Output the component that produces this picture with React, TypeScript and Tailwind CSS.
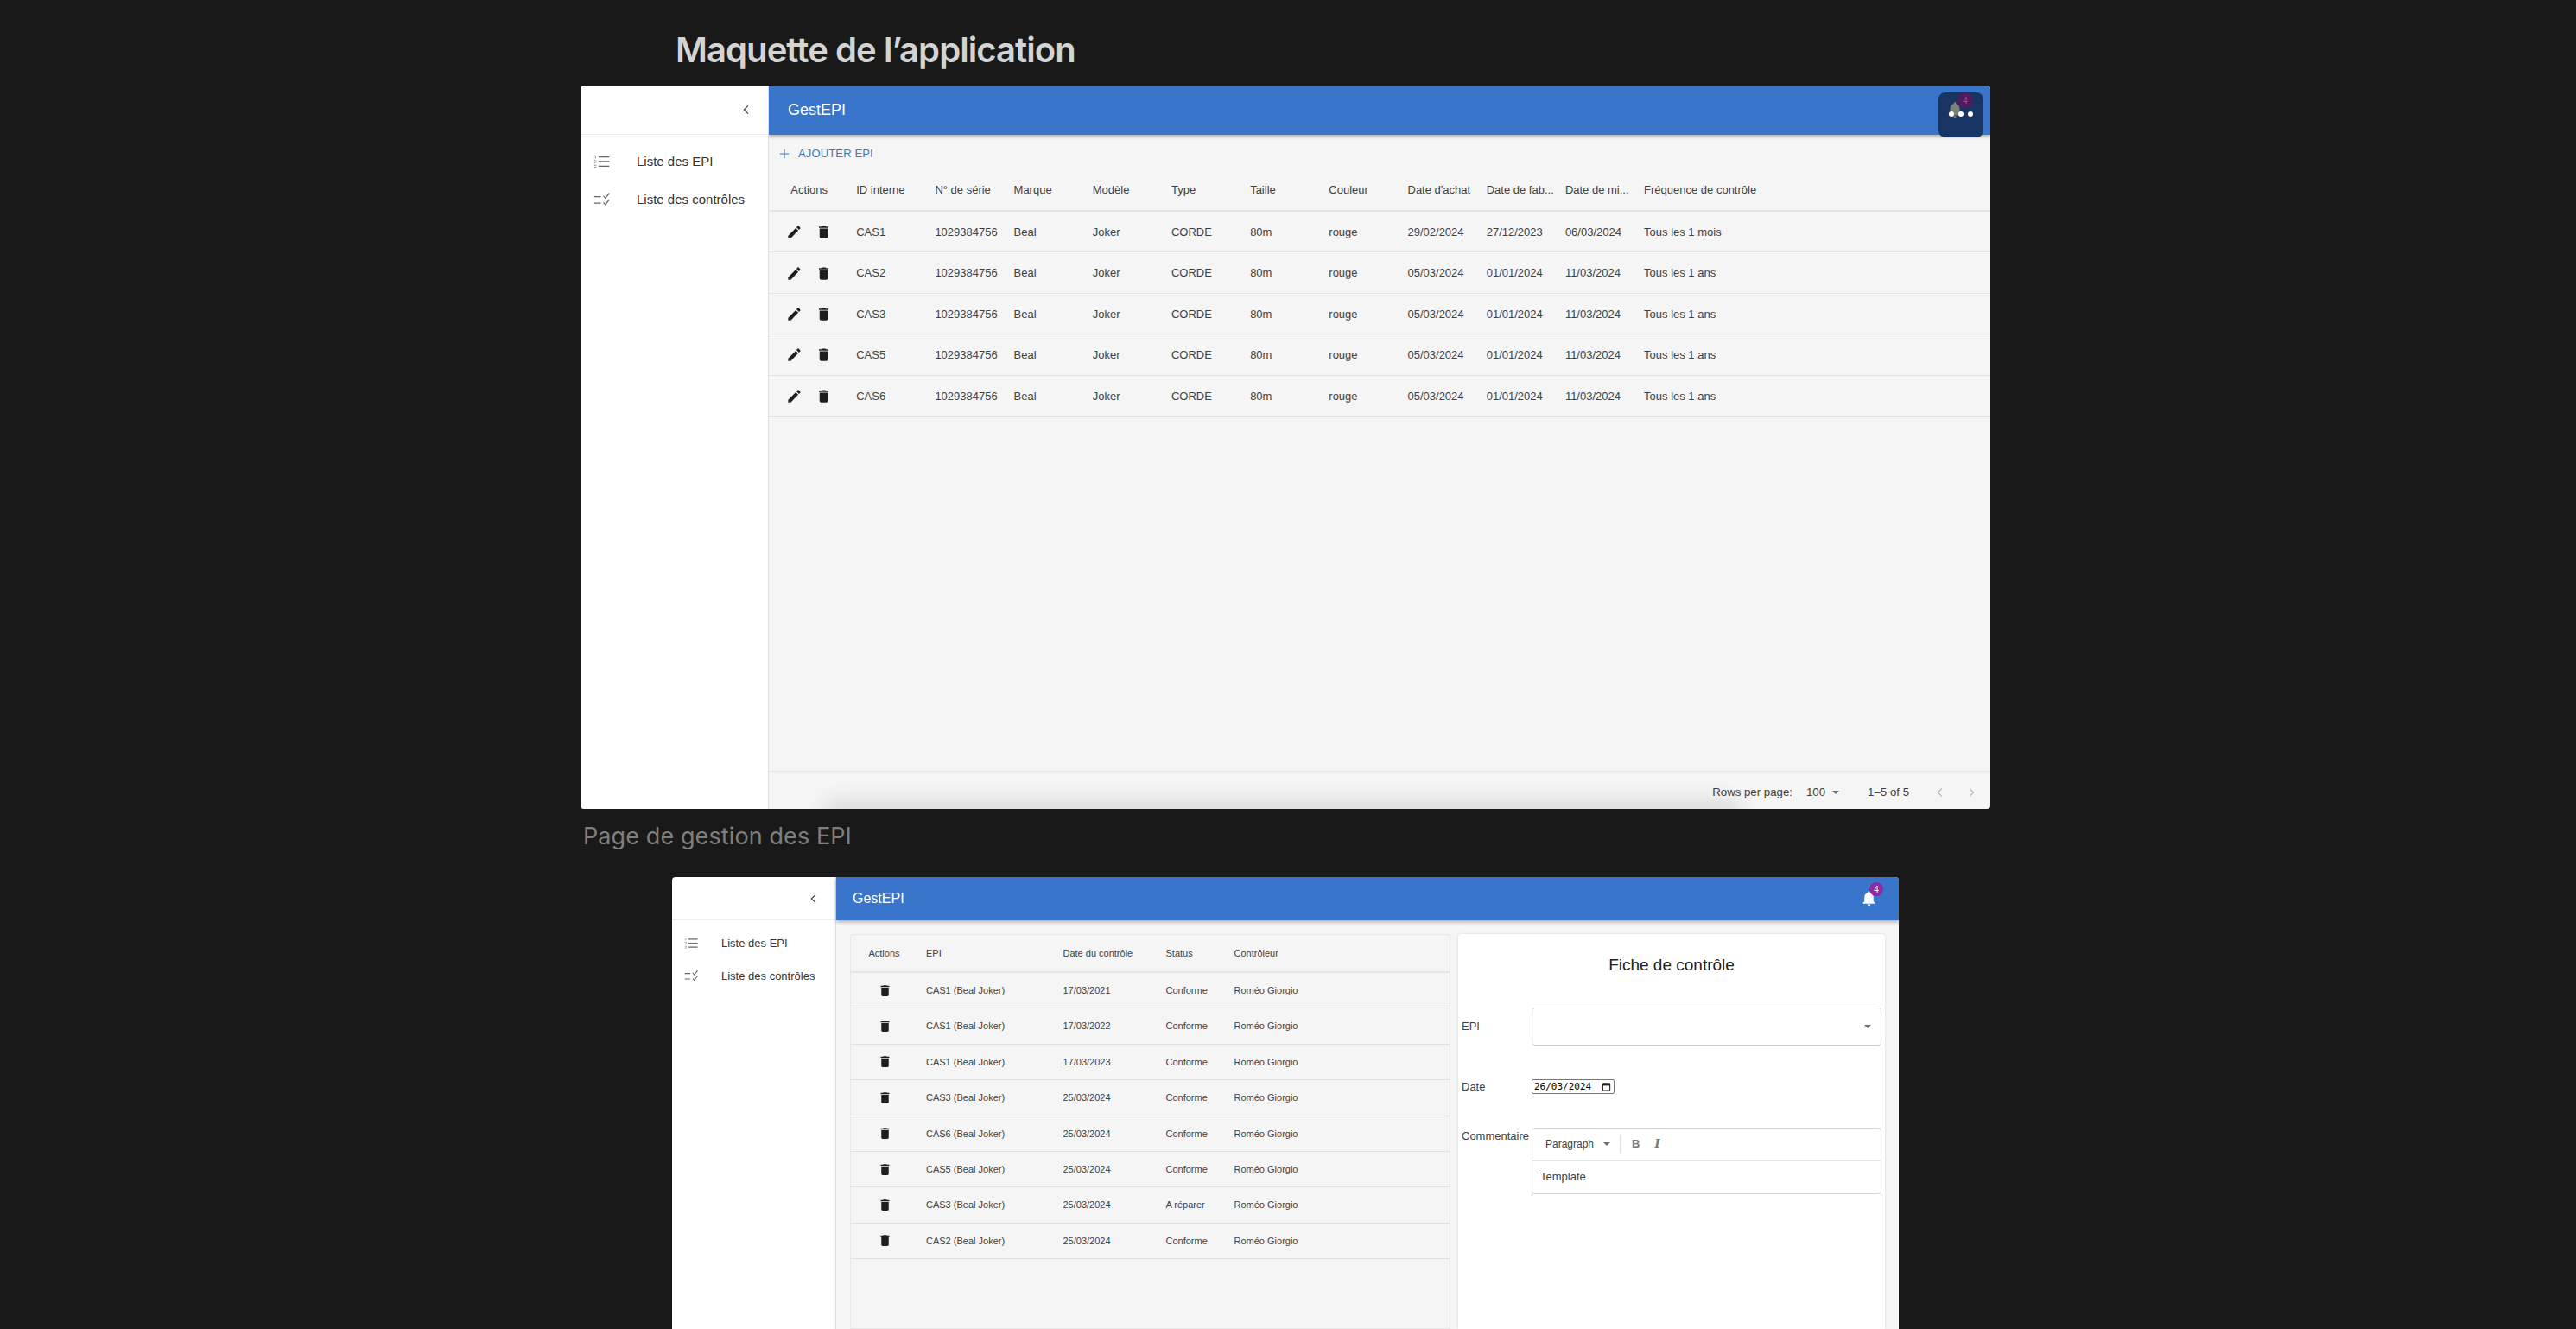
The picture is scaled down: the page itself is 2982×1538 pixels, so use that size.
import React from "react";

const sans = "font-['Liberation_Sans',Arial,sans-serif]";

const EDIT = "M3 17.25V21h3.75L17.81 9.94l-3.75-3.75L3 17.25zM20.71 7.04c.39-.39.39-1.02 0-1.41l-2.34-2.34c-.39-.39-1.02-.39-1.41 0l-1.83 1.83 3.75 3.75 1.83-1.83z";
const TRASH = "M6 19c0 1.1.9 2 2 2h8c1.1 0 2-.9 2-2V7H6v12zM19 4h-3.5l-1-1h-5l-1 1H5v2h14V4z";
const BELL = "M12 22c1.1 0 2-.9 2-2h-4c0 1.1.89 2 2 2zm6-6v-5c0-3.07-1.64-5.64-4.5-6.32V4c0-.83-.67-1.5-1.5-1.5s-1.5.67-1.5 1.5v.68C7.63 5.36 6 7.92 6 11v5l-2 2v1h16v-1l-2-2z";

function Mui({ d, className }: { d: string; className: string }) {
  return (
    <svg viewBox="0 0 24 24" fill="currentColor" className={className}>
      <path d={d} />
    </svg>
  );
}

function Chevron({ left, className }: { left?: boolean; className: string }) {
  return (
    <svg viewBox="0 0 24 24" fill="none" stroke="currentColor" strokeWidth="1.8" className={className}>
      <path d={left ? "M15 5l-7 7 7 7" : "M9 5l7 7-7 7"} />
    </svg>
  );
}

function Caret({ className }: { className: string }) {
  return (
    <svg viewBox="0 0 10 5" fill="currentColor" className={className}>
      <path d="M0 0h10L5 5z" />
    </svg>
  );
}

function NumberedIcon({ className }: { className: string }) {
  return (
    <svg viewBox="0 0 24 24" fill="none" stroke="currentColor" className={className}>
      <path d="M7 5.5h15M7 12h15M7 18.5h15" strokeWidth="1.6" />
      <path d="M1 4h2v3H1M1 10.5h2.5v3H1M1 17h2.5v3H1" strokeWidth="1" strokeDasharray="1.4 0.8" />
    </svg>
  );
}

function CheckIcon({ className }: { className: string }) {
  return (
    <svg viewBox="0 0 24 24" fill="none" stroke="currentColor" className={className}>
      <path d="M1 8h9M1 17h9" strokeWidth="1.6" />
      <path d="M14 7l2.5 3L22 3M14 16l2.5 3L22 12" strokeWidth="1.5" />
    </svg>
  );
}

const epiHead = ["ID interne", "N° de série", "Marque", "Modèle", "Type", "Taille", "Couleur", "Date d'achat", "Date de fab...", "Date de mi...", "Fréquence de contrôle"];
const epiRows = [
  ["CAS1", "29/02/2024", "27/12/2023", "06/03/2024", "Tous les 1 mois"],
  ["CAS2", "05/03/2024", "01/01/2024", "11/03/2024", "Tous les 1 ans"],
  ["CAS3", "05/03/2024", "01/01/2024", "11/03/2024", "Tous les 1 ans"],
  ["CAS5", "05/03/2024", "01/01/2024", "11/03/2024", "Tous les 1 ans"],
  ["CAS6", "05/03/2024", "01/01/2024", "11/03/2024", "Tous les 1 ans"],
];
const ctrlRows = [
  ["CAS1 (Beal Joker)", "17/03/2021", "Conforme"],
  ["CAS1 (Beal Joker)", "17/03/2022", "Conforme"],
  ["CAS1 (Beal Joker)", "17/03/2023", "Conforme"],
  ["CAS3 (Beal Joker)", "25/03/2024", "Conforme"],
  ["CAS6 (Beal Joker)", "25/03/2024", "Conforme"],
  ["CAS5 (Beal Joker)", "25/03/2024", "Conforme"],
  ["CAS3 (Beal Joker)", "25/03/2024", "A réparer"],
  ["CAS2 (Beal Joker)", "25/03/2024", "Conforme"],
];

const epiGrid = "grid grid-cols-[repeat(12,91.2px)_1fr] items-center";
const ctrlGrid = "grid grid-cols-[77px_158.5px_119px_79px_1fr] items-center";

function EpiTable() {
  return (
    <div className="flex-1 min-w-0 flex flex-col bg-[#f5f5f5] text-[13px] text-[#3f3f3f] relative overflow-hidden">
      <div className="h-[57px] shrink-0 flex items-center justify-between bg-[#3975cb] pl-[22px] shadow-[0_2px_4px_rgba(0,0,0,0.3)] rounded-tr-[4px] relative">
        <span className="text-[18px] text-white">GestEPI</span>
      </div>
      <div className="h-[44px] shrink-0 flex items-center pl-[12px] text-[#3975cb]">
        <svg viewBox="0 0 14 14" fill="none" stroke="currentColor" strokeWidth="1.3" className="w-[12px] h-[12px]">
          <path d="M7 1v12M1 7h12" />
        </svg>
        <span className="ml-[10px] tracking-[0.15px]">AJOUTER EPI</span>
      </div>
      <div className={`${epiGrid} h-[45px] shrink-0 border-b-[2px] border-[#e4e4e4] pb-[4px]`}>
        <div className="text-center pl-[2px]">Actions</div>
        {epiHead.map((h) => (
          <div key={h} className="pl-[10px] whitespace-nowrap">{h}</div>
        ))}
      </div>
      {epiRows.map((r) => (
        <div key={r[0]} className={`${epiGrid} h-[47.4px] shrink-0 border-b border-[#e2e2e2] pt-[1px]`}>
          <div className="flex items-center justify-center gap-[15px] pl-[1px]">
            <Mui d={EDIT} className="w-[19px] h-[19px] text-[#1e1e1e]" />
            <Mui d={TRASH} className="w-[19px] h-[19px] text-[#1e1e1e]" />
          </div>
          <div className="pl-[10px]">{r[0]}</div>
          <div className="pl-[10px]">1029384756</div>
          <div className="pl-[10px]">Beal</div>
          <div className="pl-[10px]">Joker</div>
          <div className="pl-[10px]">CORDE</div>
          <div className="pl-[10px]">80m</div>
          <div className="pl-[10px]">rouge</div>
          <div className="pl-[10px]">{r[1]}</div>
          <div className="pl-[10px]">{r[2]}</div>
          <div className="pl-[10px]">{r[3]}</div>
          <div className="pl-[10px] whitespace-nowrap">{r[4]}</div>
          <div />
        </div>
      ))}
      <div className="flex-1" />
      <div className="h-[44px] shrink-0 border-t border-[#e4e4e4] flex items-center justify-end pr-[14px] pt-[4px] text-[13.25px] relative">
        <span className="absolute left-[75px] right-[300px] -bottom-[4px] h-[4px] shadow-[0_0_22px_10px_rgba(0,0,0,0.11)]" />
        <span className="relative">Rows per page:</span>
        <span className="ml-[16px]">100</span>
        <Caret className="w-[8px] h-[4px] ml-[8px] text-[#6f6f6f]" />
        <span className="ml-[33px]">1–5 of 5</span>
        <Chevron left className="w-[16px] h-[16px] ml-[28px] text-[#b5b5b5]" />
        <Chevron className="w-[16px] h-[16px] ml-[20px] text-[#b5b5b5]" />
      </div>
    </div>
  );
}

function ControlPanel() {
  return (
    <div className="flex-1 min-w-0 flex flex-col bg-[#f5f5f5] text-[#3f3f3f]">
      <div className="h-[50px] shrink-0 flex items-center justify-between bg-[#3975cb] pl-[19px] pr-[24px] shadow-[0_2px_4px_rgba(0,0,0,0.3)] rounded-tr-[4px] relative">
        <span className="text-[16px] text-white">GestEPI</span>
        <div className="relative mb-[1px]">
          <Mui d={BELL} className="w-[21px] h-[21px] text-white" />
          <span className="absolute -top-[8px] -right-[6px] w-[16px] h-[16px] rounded-full bg-[#8a2ba3] text-white text-[10px] flex items-center justify-center">4</span>
        </div>
      </div>
      <div className="flex-1 min-h-0 flex gap-[9px] pl-[16px] pr-[16px] pt-[16px]">
        <div className="w-[695px] shrink-0 border border-[#e8e8e8] rounded-t-[4px] text-[11px]">
          <div className={`${ctrlGrid} h-[44px] border-b-[2px] border-[#e4e4e4]`}>
            <div className="text-center">Actions</div>
            <div className="pl-[10px]">EPI</div>
            <div className="pl-[10px]">Date du contrôle</div>
            <div className="pl-[10px]">Status</div>
            <div className="pl-[10px]">Contrôleur</div>
          </div>
          {ctrlRows.map((r, i) => (
            <div key={i} className={`${ctrlGrid} h-[41.4px] border-b border-[#e0e0e0]`}>
              <div className="flex justify-center pl-[1px]">
                <Mui d={TRASH} className="w-[17px] h-[17px] text-[#1e1e1e]" />
              </div>
              <div className="pl-[10px]">{r[0]}</div>
              <div className="pl-[10px]">{r[1]}</div>
              <div className="pl-[10px]">{r[2]}</div>
              <div className="pl-[10px]">Roméo Giorgio</div>
            </div>
          ))}
        </div>
        <div className="flex-1 min-w-0 bg-white rounded-t-[4px] shadow-[0_0_3px_rgba(0,0,0,0.12)] pl-[4px] pr-[4px]">
          <h2 className="text-center text-[19px] text-[#222] mt-[24px] leading-[24px]">Fiche de contrôle</h2>
          <div className="mt-[37px] flex items-center text-[13px]">
            <span className="w-[81px] shrink-0">EPI</span>
            <div className="flex-1 h-[44px] border border-[#cfcfcf] rounded-[4px] flex items-center justify-end pr-[11px]">
              <Caret className="w-[8px] h-[4px] text-[#6f6f6f]" />
            </div>
          </div>
          <div className="mt-[38px] flex items-center text-[13px]">
            <span className="w-[81px] shrink-0">Date</span>
            <div className="w-[96px] h-[17px] border border-[#767676] rounded-[2px] flex items-center justify-between pl-[2px] pr-[3px] text-[11px] text-black font-['DejaVu_Sans_Mono',monospace]">
              <span>26/03/2024</span>
              <svg viewBox="0 0 12 12" className="w-[11px] h-[11px]" fill="none" stroke="#222" strokeWidth="1.2">
                <rect x="1.5" y="2" width="9" height="9" rx="1" />
                <path d="M1.5 3.8h9" strokeWidth="2" />
              </svg>
            </div>
          </div>
          <div className="mt-[37px] flex items-start text-[13px]">
            <span className="w-[81px] shrink-0">Commentaire</span>
            <div className="flex-1 h-[77px] border border-[#d6d6d6] rounded-[4px] flex flex-col">
              <div className="h-[38px] shrink-0 border-b border-[#e2e2e2] flex items-center pl-[15px] text-[12px]">
                <span>Paragraph</span>
                <Caret className="w-[8px] h-[4px] ml-[11px] text-[#6f6f6f]" />
                <span className="w-px h-[22px] bg-[#e2e2e2] ml-[11px]" />
                <span className="ml-[13px] font-bold text-[#777] text-[13px]">B</span>
                <span className="ml-[17px] font-bold italic text-[#777] text-[13px] font-['DejaVu_Serif',serif]">I</span>
              </div>
              <div className="flex-1 flex items-center pl-[9px]">Template</div>
            </div>
          </div>
        </div>
      </div>
    </div>
  );
}

function Sidebar({ w, h, text, itemGap, icon, pad, top }: { w: string; h: string; text: string; itemGap: string; icon: string; pad: string; top: string }) {
  return (
    <aside className={`${w} shrink-0 bg-white border-r border-[#dedede] flex flex-col text-[#333] ${text}`}>
      <div className={`${h} shrink-0 flex items-center justify-end pr-[17px] border-b border-[#ececec] text-[#444]`}>
        <Chevron left className="w-[16px] h-[16px]" />
      </div>
      <div className={`flex flex-col ${itemGap} ${pad} ${top}`}>
        <div className="flex items-center">
          <NumberedIcon className={`${icon} text-[#666]`} />
          Liste des EPI
        </div>
        <div className="flex items-center">
          <CheckIcon className={`${icon} text-[#666]`} />
          Liste des contrôles
        </div>
      </div>
    </aside>
  );
}

export default function App() {
  return (
    <div className={`h-[1538px] overflow-hidden bg-[#191919] ${sans}`}>
      <h1 className="pt-[36px] pl-[782px] h-[99px] font-['Inter',sans-serif] font-semibold text-[40px] leading-[44px] tracking-[-0.92px] text-[#d4d4d4]">
        Maquette de l’application
      </h1>
      <div className="relative ml-[672px] w-[1632px] h-[837px] rounded-[4px] overflow-hidden flex">
        <Sidebar w="w-[218px]" h="h-[57px]" text="text-[15px]" itemGap="gap-[21.5px]" icon="w-[20px] h-[20px] mr-[30px]" pad="pl-[15px]" top="pt-[20px]" />
        <EpiTable />
        <div className="absolute top-[8px] right-[8px] w-[52px] h-[52px] rounded-[8px] bg-[#183462]">
          <Mui d={BELL} className="absolute left-[8px] top-[9px] w-[22px] h-[22px] text-[#7b8078]" />
          <span className="absolute left-[22px] top-[0px] w-[18px] h-[18px] rounded-full bg-[#541a5e] text-[#8c5a90] text-[10px] flex items-center justify-center">4</span>
          <div className="absolute left-[12px] top-[22px] flex gap-[5px]">
            <span className="w-[6px] h-[6px] rounded-full bg-white" />
            <span className="w-[6px] h-[6px] rounded-full bg-white" />
            <span className="w-[6px] h-[6px] rounded-full bg-white" />
          </div>
        </div>
      </div>
      <div className="pt-[12px] pl-[675px] h-[79px] font-['Inter',sans-serif] text-[27px] leading-[40px] tracking-[0.1px] text-[#7f7f7f]">
        Page de gestion des EPI
      </div>
      <div className="ml-[778px] w-[1420px] h-[523px] rounded-t-[4px] overflow-hidden flex">
        <Sidebar w="w-[190px]" h="h-[50px]" text="text-[13px]" itemGap="gap-[18.5px]" icon="w-[17px] h-[17px] mr-[26px]" pad="pl-[14px]" top="pt-[17px]" />
        <ControlPanel />
      </div>
    </div>
  );
}
